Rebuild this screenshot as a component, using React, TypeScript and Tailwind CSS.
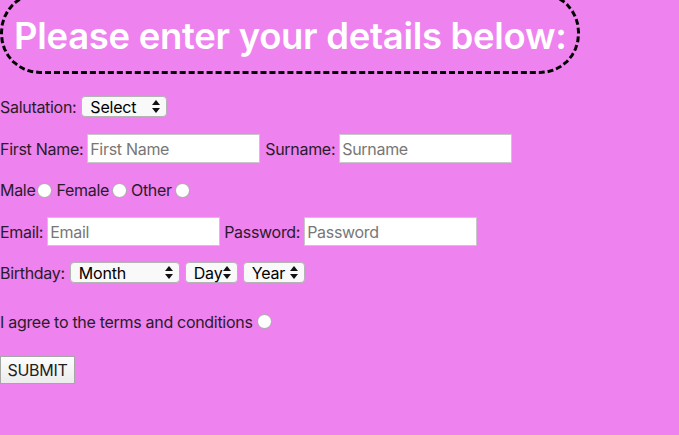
import type { ReactNode } from "react"

const font = { fontFamily: "Inter, 'Noto Sans', sans-serif" }

function Arrows() {
  return (
    <svg width="8" height="13" viewBox="0 0 8 13" className="shrink-0">
      <path d="M4 0 L8 5 L0 5 Z" fill="#111" />
      <path d="M0 8 L8 8 L4 13 Z" fill="#111" />
    </svg>
  )
}

function FakeSelect({ label, width }: { label: string; width: string }) {
  return (
    <div
      className={`flex h-[21px] ${width} shrink-0 items-center justify-between rounded-[4px] border border-[#b4b4b4] bg-[#f9f9f9] pl-[8px] pr-[6px] text-[16px] leading-none tracking-[-0.2px] text-black`}
    >
      <span>{label}</span>
      <Arrows />
    </div>
  )
}

function TextBox({ placeholder }: { placeholder: string }) {
  return (
    <input
      placeholder={placeholder}
      className="h-[29px] w-[173px] shrink-0 border border-[#c8c8c8] bg-white px-[2px] text-[16px] tracking-[-0.3px] text-black outline-none placeholder:text-[#777]"
      style={font}
    />
  )
}

function Radio() {
  return <span className="inline-block h-[15px] w-[15px] shrink-0 rounded-full border border-[#a8a8a8] bg-white" />
}

function Row({ children, className }: { children: ReactNode; className: string }) {
  return <div className={`flex items-center ${className}`}>{children}</div>
}

export default function App() {
  return (
    <div
      className="min-h-[435px] w-full overflow-hidden bg-[#ee82ee] text-[16px] tracking-[-0.3px] text-[#2a1a2c]"
      style={font}
    >
      {/* heading */}
      <div className="-mt-[8px] flex h-[82px] w-[580px] items-center rounded-[40px] border-[3px] border-dashed border-black pl-[11px]">
        <h1 className="mt-[6px] text-[36.5px] font-semibold leading-none tracking-[-0.3px] text-white">
          Please enter your details below:
        </h1>
      </div>

      <Row className="mt-[22px] h-[21px] gap-[5px]">
        <span>Salutation:</span>
        <FakeSelect label="Select" width="w-[86px]" />
      </Row>

      <Row className="mt-[17px] h-[29px] gap-[4px]">
        <span>First Name:</span>
        <TextBox placeholder="First Name" />
        <span className="ml-[1px]">Surname:</span>
        <TextBox placeholder="Surname" />
      </Row>

      <Row className="mt-[19px] h-[16px]">
        <span>Male</span>
        <span className="ml-[2px] mr-[4px] flex"><Radio /></span>
        <span>Female</span>
        <span className="ml-[3px] mr-[4px] flex"><Radio /></span>
        <span>Other</span>
        <span className="ml-[3px] flex"><Radio /></span>
      </Row>

      <Row className="mt-[19px] h-[29px] gap-[4px]">
        <span>Email:</span>
        <TextBox placeholder="Email" />
        <span>Password:</span>
        <TextBox placeholder="Password" />
      </Row>

      <Row className="mt-[16px] h-[21px] gap-[5px]">
        <span>Birthday:</span>
        <FakeSelect label="Month" width="w-[110px]" />
        <FakeSelect label="Day" width="w-[53px]" />
        <FakeSelect label="Year" width="w-[62px]" />
      </Row>

      <Row className="mt-[31px] h-[15px]">
        <span>I agree to the terms and conditions</span>
        <span className="ml-[4px] flex"><Radio /></span>
      </Row>

      <div className="mt-[27px] pb-[40px]">
        <button
          className="h-[28px] w-[75px] border border-[#a6a6a6] bg-gradient-to-b from-[#fdfdfd] to-[#ececec] text-[16px] leading-none tracking-[-0.3px] text-[#222]"
          style={font}
        >
          SUBMIT
        </button>
      </div>
    </div>
  )
}
